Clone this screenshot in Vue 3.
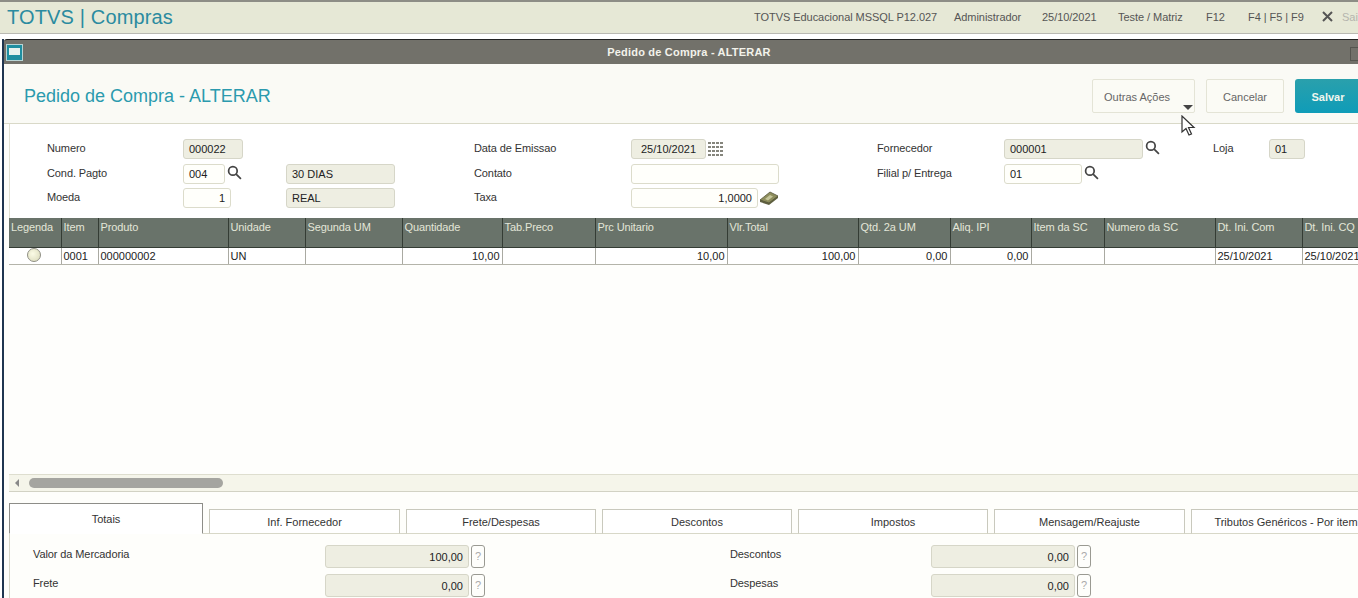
<template>
  <div class="app">
    <header class="topbar">
      <div class="brand">TOTVS | Compras</div>
      <div class="top-info">
        <span v-for="t in topInfo" :key="t.text" class="info-item" :style="{ width: t.w + 'px' }">{{ t.text }}</span>
        <svg class="x-icon" width="11" height="11" viewBox="0 0 11 11"><path d="M1 1l9 9M10 1l-9 9" stroke="#555" stroke-width="2" fill="none" /></svg>
        <span class="sair">Sair</span>
      </div>
    </header>

    <section class="window">
      <div class="titlebar">
        <span class="win-icon"><span></span></span>
        <span class="win-title">Pedido de Compra - ALTERAR</span>
        <span class="win-btn"></span>
      </div>

      <div class="page-head">
        <h1>Pedido de Compra - ALTERAR</h1>
        <div class="actions">
          <button class="btn btn-more">Outras Ações<i class="caret"></i></button>
          <button class="btn btn-cancel">Cancelar</button>
          <button class="btn btn-save">Salvar</button>
        </div>
      </div>

      <div class="form">
        <div class="form-grid">
          <label>Numero</label>
          <div class="cell"><span class="field ro w60">000022</span></div>
          <label>Data de Emissao</label>
          <div class="cell">
            <span class="field ro w75 pad8">25/10/2021</span>
            <svg class="cal" width="16" height="14" viewBox="0 0 16 14"><path d="M0 1h16M0 5h16M0 9h16M0 13h16" stroke="#85857c" stroke-width="2" stroke-dasharray="3 1" fill="none" /></svg>
          </div>
          <label>Fornecedor</label>
          <div class="cell">
            <span class="field ro w139">000001</span>
            <svg class="lens" viewBox="0 0 14 14"><circle cx="5.5" cy="5.5" r="4" /><path d="M8.5 8.5l4.5 4.5" /></svg>
          </div>
          <label>Loja</label>
          <div class="cell"><span class="field ro w36">01</span></div>

          <label>Cond. Pagto</label>
          <div class="cell">
            <span class="field w42">004</span>
            <svg class="lens" viewBox="0 0 14 14"><circle cx="5.5" cy="5.5" r="4" /><path d="M8.5 8.5l4.5 4.5" /></svg>
            <span class="field ro w109 desc">30 DIAS</span>
          </div>
          <label>Contato</label>
          <div class="cell"><span class="field w148"></span></div>
          <label>Filial p/ Entrega</label>
          <div class="cell">
            <span class="field w78">01</span>
            <svg class="lens" viewBox="0 0 14 14"><circle cx="5.5" cy="5.5" r="4" /><path d="M8.5 8.5l4.5 4.5" /></svg>
          </div>
          <label></label>
          <div class="cell"></div>

          <label>Moeda</label>
          <div class="cell">
            <span class="field num w48">1</span>
            <span class="field ro w109 desc2">REAL</span>
          </div>
          <label>Taxa</label>
          <div class="cell">
            <span class="field num w127">1,0000</span>
            <svg class="money" width="20" height="15" viewBox="0 0 20 15"><path d="M1 9v2l9 3 9-7V5z" fill="#5f6040" /><path d="M1 9l10-8 8 4-9 7z" fill="#8d8d5c" stroke="#55553a" stroke-width=".8" /><path d="M6 8l5-4 3 1.5-5 4z" fill="#c6c69a" /></svg>
          </div>
          <label></label>
          <div class="cell"></div>
          <label></label>
          <div class="cell"></div>
        </div>
      </div>

      <div class="grid-wrap">
        <table class="items">
          <colgroup>
            <col v-for="c in columns" :key="c.name" :style="{ width: c.w + 'px' }" />
          </colgroup>
          <thead>
            <tr><th v-for="c in columns" :key="c.name">{{ c.name }}</th></tr>
          </thead>
          <tbody>
            <tr>
              <td class="legend"><span class="dot"></span></td>
              <td v-for="c in columns.slice(1)" :key="c.name" :class="{ right: c.right }">{{ c.value }}</td>
            </tr>
          </tbody>
        </table>
      </div>

      <div class="hscroll">
        <i class="arrow"></i>
        <span class="thumb"></span>
      </div>

      <div class="tabs">
        <div v-for="(t, i) in tabs" :key="t.name" class="tab" :class="{ active: i === 0 }" :style="{ width: t.w + 'px' }">{{ t.name }}</div>
      </div>

      <div class="totals">
        <template v-for="r in totals" :key="r[0]">
          <label>{{ r[0] }}</label>
          <div class="cell"><span class="field ro num tot">{{ r[1] }}</span><span class="help">?</span></div>
          <label>{{ r[2] }}</label>
          <div class="cell"><span class="field ro num tot">{{ r[3] }}</span><span class="help">?</span></div>
        </template>
      </div>
    </section>

    <svg class="cursor" width="15" height="21" viewBox="0 0 15 21"><path d="M1 1v16l4-3.5 3 6.5 2.5-1-3-6.5H13z" fill="#fff" stroke="#333" stroke-width="1.2" /></svg>
  </div>
</template>

<script setup>
const topInfo = [
  { text: 'TOTVS Educacional MSSQL P12.027', w: 200 },
  { text: 'Administrador', w: 88 },
  { text: '25/10/2021', w: 76 },
  { text: 'Teste / Matriz', w: 88 },
  { text: 'F12', w: 42 },
  { text: 'F4 | F5 | F9', w: 74 },
]

const columns = [
  { name: 'Legenda', w: 52 },
  { name: 'Item', w: 37, value: '0001' },
  { name: 'Produto', w: 130, value: '000000002' },
  { name: 'Unidade', w: 77, value: 'UN' },
  { name: 'Segunda UM', w: 97, value: '' },
  { name: 'Quantidade', w: 100, value: '10,00', right: true },
  { name: 'Tab.Preco', w: 93, value: '' },
  { name: 'Prc Unitario', w: 132, value: '10,00', right: true },
  { name: 'Vlr.Total', w: 131, value: '100,00', right: true },
  { name: 'Qtd. 2a UM', w: 92, value: '0,00', right: true },
  { name: 'Aliq. IPI', w: 81, value: '0,00', right: true },
  { name: 'Item da SC', w: 73, value: '' },
  { name: 'Numero da SC', w: 111, value: '' },
  { name: 'Dt. Ini. Com', w: 87, value: '25/10/2021' },
  { name: 'Dt. Ini. CQ', w: 80, value: '25/10/2021' },
]

const tabs = [
  { name: 'Totais', w: 194 },
  { name: 'Inf. Fornecedor', w: 191 },
  { name: 'Frete/Despesas', w: 190 },
  { name: 'Descontos', w: 190 },
  { name: 'Impostos', w: 190 },
  { name: 'Mensagem/Reajuste', w: 191 },
  { name: 'Tributos Genéricos - Por item', w: 190 },
]

const totals = [
  ['Valor da Mercadoria', '100,00', 'Descontos', '0,00'],
  ['Frete', '0,00', 'Despesas', '0,00'],
]
</script>

<style>
html, body { margin: 0; overflow: hidden; background: #fff; }
</style>

<style scoped>
.app {
  position: relative;
  width: 1358px;
  height: 598px;
  overflow: hidden;
  font-family: "Liberation Sans", Arial, sans-serif;
  font-size: 11px;
  color: #333;
  background: #fff;
}

/* top bar */
.topbar {
  display: flex;
  justify-content: space-between;
  align-items: center;
  height: 31px;
  border-top: 2px solid #8d8d86;
  border-bottom: 1px solid #b9b9b2;
  background: #e6e8d6;
}
.brand {
  padding-left: 7px;
  font-size: 20px;
  letter-spacing: 0.15px;
  color: #2b8ba0;
}
.top-info { display: flex; align-items: center; width: 604px; flex: none; padding-bottom: 2px; }
.info-item { flex: none; color: #555; letter-spacing: -0.05px; }
.x-icon { flex: none; margin-right: 9px; }
.sair { color: #b5b5ae; }

/* janela */
.window {
  box-sizing: border-box;
  width: 1374px;
  height: 560px;
  margin: 5px 0 0 2px;
  border-left: 2px solid #1f3550;
  background: #fefefb;
}
.titlebar {
  position: relative;
  display: flex;
  align-items: center;
  justify-content: center;
  height: 25px;
  border-top: 1px solid #222;
  box-sizing: border-box;
  border-radius: 3px 0 0 0;
  background: #72716a;
}
.win-icon {
  position: absolute;
  left: 2px;
  top: 4px;
  box-sizing: border-box;
  width: 17px;
  height: 17px;
  padding: 3px 2px 5px;
  border: 1px solid #b8d4d4;
  background: #1f8ea0;
}
.win-icon span { display: block; height: 100%; background: #e8f2ee; }
.win-title { color: #f2f2ea; font-weight: bold; letter-spacing: 0.2px; margin-right: 2px; }
.win-btn {
  position: absolute;
  left: 1346px;
  top: 7px;
  width: 12px;
  height: 12px;
  border: 1px solid #55554f;
}

.page-head {
  display: flex;
  align-items: flex-start;
  height: 60px;
  box-sizing: border-box;
  border-bottom: 1px solid #d9d9c8;
  background: #fafaf5;
}
.page-head h1 {
  margin: 22px 0 0 20px;
  font-size: 18px;
  font-weight: normal;
  color: #2b9aae;
  width: 1068px;
  flex: none;
}
.actions { display: flex; gap: 11px; padding-top: 15px; }
.btn {
  position: relative;
  height: 34px;
  padding: 2px 0 0;
  border: 1px solid #e4e4d6;
  border-radius: 2px;
  background: #fbfbf5;
  font: inherit;
  color: #666;
}
.btn-more { width: 103px; text-align: left; padding-left: 11px; }
.btn-cancel { width: 78px; }
.btn-save {
  width: 66px;
  border: 0;
  border-radius: 3px;
  background: linear-gradient(#2aa0ac, #0f9cb8);
  color: #f0f6ee;
  font-weight: bold;
}
.caret {
  position: absolute;
  left: 90px;
  top: 25px;
  border-left: 5px solid transparent;
  border-right: 5px solid transparent;
  border-top: 5px solid #444;
}

/* formulario */
.form { margin-left: 5px; border-left: 1px solid #e0e0d2; height: 94px; box-sizing: border-box; padding: 15px 0 0 37px; background: #fff; }
.form-grid {
  display: grid;
  grid-template-columns: 136px 291px 157px 246px 127px 209px 56px 80px;
  grid-template-rows: 25px 24px 25px;
  color: #333;
}
label { line-height: 18px; letter-spacing: -0.1px; }
.cell { display: flex; align-items: flex-start; }
.field {
  flex: none;
  display: block;
  box-sizing: border-box;
  height: 20px;
  line-height: 19px;
  padding: 0 5px;
  border: 1px solid #dcdccb;
  border-radius: 3px;
  background: #fffffb;
  color: #222;
}
.field.ro {
  border-color: #d6d6c8;
  background: #eeeee2;
}
.num { text-align: right; }
.pad8 { padding-left: 9px; }
.w60 { width: 60px; }
.w75 { width: 75px; }
.w139 { width: 139px; }
.w36 { width: 36px; }
.w42 { width: 42px; }
.w148 { width: 148px; }
.w78 { width: 78px; }
.w48 { width: 48px; }
.w127 { width: 127px; }
.w109 { width: 109px; }
.desc { margin-left: 44px; }
.desc2 { margin-left: 55px; }
.cal { margin: 3px 0 0 2px; }
.money { margin: 3px 0 0 1px; }
.lens {
  flex: none;
  width: 15px;
  height: 15px;
  margin: 1px 0 0 2px;
  fill: none;
  stroke: #444;
  stroke-width: 1.6;
}

/* tabela */
.grid-wrap { margin-left: 5px; height: 257px; overflow: hidden; border-bottom: 1px solid #dedecf; box-sizing: border-box; background: #fefefc; }
.items { width: 1373px; table-layout: fixed; border-collapse: collapse; }
.items th {
  height: 29px;
  padding: 3px 0 0 2px;
  box-sizing: border-box;
  vertical-align: top;
  text-align: left;
  font-weight: normal;
  letter-spacing: -0.1px;
  white-space: nowrap;
  overflow: hidden;
  color: #e3e6d8;
  border-left: 1px solid #343c34;
  border-bottom: 1px solid #343c34;
  background: #69736a;
}
.items td {
  height: 17px;
  padding: 0 2px;
  box-sizing: border-box;
  white-space: nowrap;
  overflow: hidden;
  color: #222;
  background: #fff;
  border-left: 1px solid #aaaaa2;
  border-bottom: 1px solid #b4b4aa;
}
.items th:first-child, .items td:first-child { border-left: 0; }
.items td.right { text-align: right; }
.items td.legend { padding: 0; vertical-align: top; }
.dot {
  display: block;
  width: 14px;
  height: 14px;
  box-sizing: border-box;
  margin: 0 0 0 18px;
  border: 1px solid #8f8f85;
  border-radius: 50%;
  background: radial-gradient(circle at 40% 40%, #fbfbe6, #d8d8b8);
}

.hscroll {
  display: flex;
  align-items: center;
  gap: 10px;
  height: 16px;
  margin-left: 5px;
  padding-left: 6px;
  border-bottom: 1px solid #d2d2c4;
  background: #f5f5ea;
}
.arrow {
  border-top: 4px solid transparent;
  border-bottom: 4px solid transparent;
  border-right: 4px solid #888;
}
.thumb { width: 194px; height: 10px; border-radius: 5px; background: #a5a5a0; }

/* abas */
.tabs { display: flex; align-items: flex-end; gap: 6px; margin: 11px 0 0 5px; height: 31px; }
.tab {
  flex: none;
  box-sizing: border-box;
  height: 25px;
  line-height: 24px;
  text-align: center;
  white-space: nowrap;
  border: 1px solid #c9c9bd;
  border-bottom: 1px solid #d8d8c8;
  background: #fff;
  color: #333;
}
.tab.active {
  height: 31px;
  line-height: 30px;
  border-color: #8d8d88;
  border-bottom-color: #fff;
}
.totals {
  display: grid;
  grid-template-columns: 292px 405px 201px 200px;
  grid-auto-rows: 29px;
  margin-left: 5px;
  margin-top: -1px;
  padding: 11px 0 0 23px;
  height: 70px;
  box-sizing: border-box;
  border-left: 1px solid #d6d6c8;
  border-top: 1px solid #d6d6c8;
  color: #333;
}
.totals label { line-height: 19px; }
.tot { width: 144px; height: 23px; line-height: 22px; padding-right: 5px; border-color: #bdbdb2; }
.help {
  flex: none;
  box-sizing: border-box;
  width: 14px;
  height: 23px;
  line-height: 21px;
  margin-left: 2px;
  text-align: center;
  border: 1px solid #9a9a92;
  border-radius: 3px;
  color: #aaa;
}
.cursor { position: absolute; left: 1181px; top: 115px; }
</style>
